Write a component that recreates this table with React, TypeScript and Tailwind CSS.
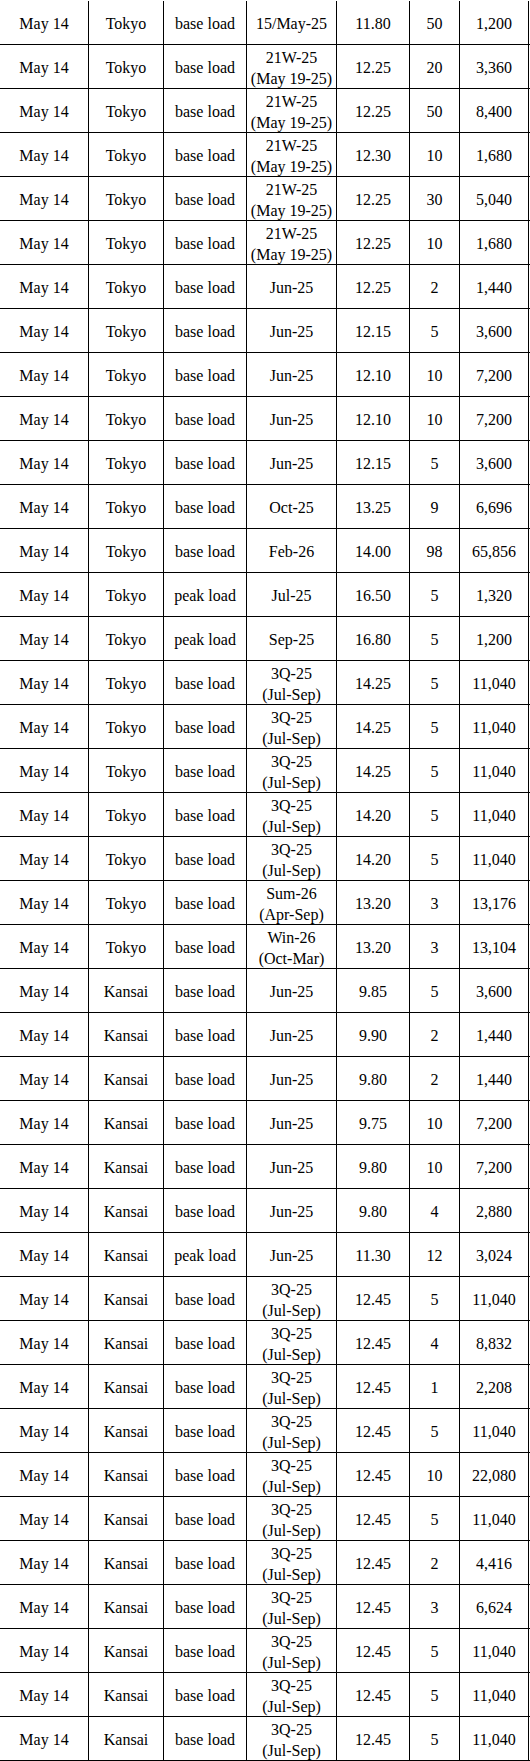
import React from 'react';

type Row = [string, string, string, string, string, string, string];

const q3 = '3Q-25\n(Jul-Sep)';
const w21 = '21W-25\n(May 19-25)';

const rows: Row[] = [
  ['May 14', 'Tokyo', 'base load', '15/May-25', '11.80', '50', '1,200'],
  ['May 14', 'Tokyo', 'base load', w21, '12.25', '20', '3,360'],
  ['May 14', 'Tokyo', 'base load', w21, '12.25', '50', '8,400'],
  ['May 14', 'Tokyo', 'base load', w21, '12.30', '10', '1,680'],
  ['May 14', 'Tokyo', 'base load', w21, '12.25', '30', '5,040'],
  ['May 14', 'Tokyo', 'base load', w21, '12.25', '10', '1,680'],
  ['May 14', 'Tokyo', 'base load', 'Jun-25', '12.25', '2', '1,440'],
  ['May 14', 'Tokyo', 'base load', 'Jun-25', '12.15', '5', '3,600'],
  ['May 14', 'Tokyo', 'base load', 'Jun-25', '12.10', '10', '7,200'],
  ['May 14', 'Tokyo', 'base load', 'Jun-25', '12.10', '10', '7,200'],
  ['May 14', 'Tokyo', 'base load', 'Jun-25', '12.15', '5', '3,600'],
  ['May 14', 'Tokyo', 'base load', 'Oct-25', '13.25', '9', '6,696'],
  ['May 14', 'Tokyo', 'base load', 'Feb-26', '14.00', '98', '65,856'],
  ['May 14', 'Tokyo', 'peak load', 'Jul-25', '16.50', '5', '1,320'],
  ['May 14', 'Tokyo', 'peak load', 'Sep-25', '16.80', '5', '1,200'],
  ['May 14', 'Tokyo', 'base load', q3, '14.25', '5', '11,040'],
  ['May 14', 'Tokyo', 'base load', q3, '14.25', '5', '11,040'],
  ['May 14', 'Tokyo', 'base load', q3, '14.25', '5', '11,040'],
  ['May 14', 'Tokyo', 'base load', q3, '14.20', '5', '11,040'],
  ['May 14', 'Tokyo', 'base load', q3, '14.20', '5', '11,040'],
  ['May 14', 'Tokyo', 'base load', 'Sum-26\n(Apr-Sep)', '13.20', '3', '13,176'],
  ['May 14', 'Tokyo', 'base load', 'Win-26\n(Oct-Mar)', '13.20', '3', '13,104'],
  ['May 14', 'Kansai', 'base load', 'Jun-25', '9.85', '5', '3,600'],
  ['May 14', 'Kansai', 'base load', 'Jun-25', '9.90', '2', '1,440'],
  ['May 14', 'Kansai', 'base load', 'Jun-25', '9.80', '2', '1,440'],
  ['May 14', 'Kansai', 'base load', 'Jun-25', '9.75', '10', '7,200'],
  ['May 14', 'Kansai', 'base load', 'Jun-25', '9.80', '10', '7,200'],
  ['May 14', 'Kansai', 'base load', 'Jun-25', '9.80', '4', '2,880'],
  ['May 14', 'Kansai', 'peak load', 'Jun-25', '11.30', '12', '3,024'],
  ['May 14', 'Kansai', 'base load', q3, '12.45', '5', '11,040'],
  ['May 14', 'Kansai', 'base load', q3, '12.45', '4', '8,832'],
  ['May 14', 'Kansai', 'base load', q3, '12.45', '1', '2,208'],
  ['May 14', 'Kansai', 'base load', q3, '12.45', '5', '11,040'],
  ['May 14', 'Kansai', 'base load', q3, '12.45', '10', '22,080'],
  ['May 14', 'Kansai', 'base load', q3, '12.45', '5', '11,040'],
  ['May 14', 'Kansai', 'base load', q3, '12.45', '2', '4,416'],
  ['May 14', 'Kansai', 'base load', q3, '12.45', '3', '6,624'],
  ['May 14', 'Kansai', 'base load', q3, '12.45', '5', '11,040'],
  ['May 14', 'Kansai', 'base load', q3, '12.45', '5', '11,040'],
  ['May 14', 'Kansai', 'base load', q3, '12.45', '5', '11,040'],
];

// column widths incl. the right border line
const widths = ['w-[89px]', 'w-[75px]', 'w-[83px]', 'w-[90px]', 'w-[73px]', 'w-[50px]', 'w-[69px]'];

const App = () => {
  return (
    <div className="bg-white min-h-screen pt-px font-['Liberation_Serif',serif] text-[16px] leading-[21px] text-black">
      {rows.map((row, i) => (
        <div key={i} className="flex h-[44px] border-b border-black">
          {row.map((cell, j) => (
            <div
              key={j}
              className={`${widths[j]} shrink-0 border-r border-black flex flex-col items-center justify-center pt-[2px] whitespace-nowrap`}
            >
              {cell.split('\n').map((line, k) => (
                <span key={k}>{line}</span>
              ))}
            </div>
          ))}
        </div>
      ))}
    </div>
  );
};

export default App;
